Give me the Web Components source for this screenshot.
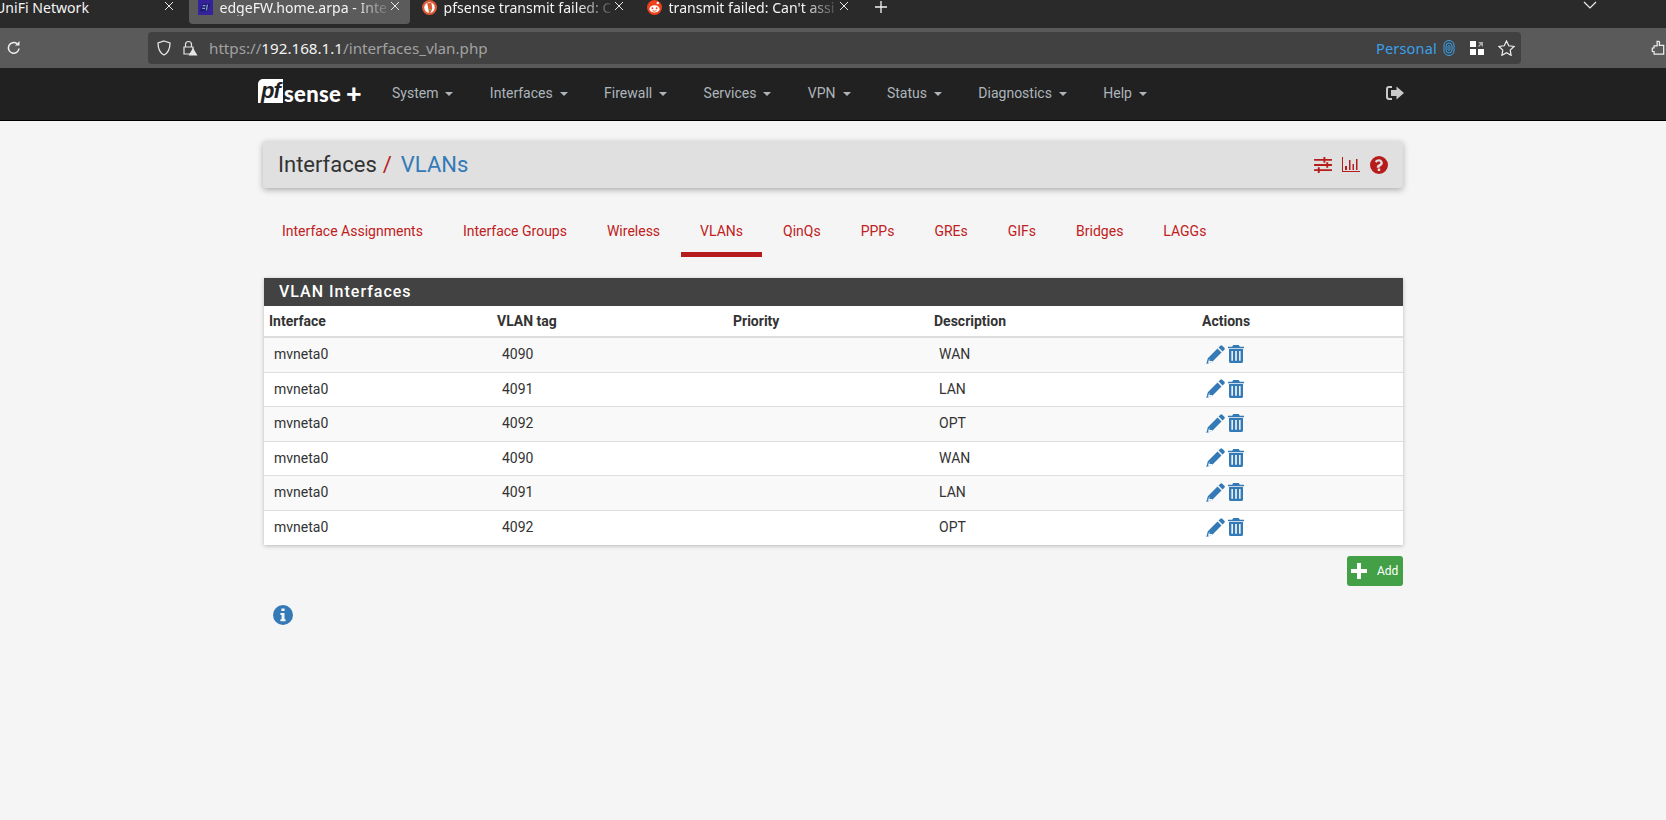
<!DOCTYPE html>
<html>
<head>
<meta charset="utf-8">
<title>VLANs</title>
<style>
    html, body { margin: 0; height: 100%; }
    body {
        background: #f5f5f5;
        font-family: Roboto, "Liberation Sans", sans-serif;
        overflow: hidden;
    }
</style>
</head>
<body>
<browser-tabs></browser-tabs>
<browser-toolbar></browser-toolbar>
<pf-navbar></pf-navbar>
<pf-page>
    <pf-breadcrumb></pf-breadcrumb>
    <pf-tabs></pf-tabs>
    <vlan-panel title="VLAN Interfaces">
        <vlan-row iface="mvneta0" tag="4090" desc="WAN"></vlan-row>
        <vlan-row iface="mvneta0" tag="4091" desc="LAN"></vlan-row>
        <vlan-row iface="mvneta0" tag="4092" desc="OPT"></vlan-row>
        <vlan-row iface="mvneta0" tag="4090" desc="WAN"></vlan-row>
        <vlan-row iface="mvneta0" tag="4091" desc="LAN"></vlan-row>
        <vlan-row iface="mvneta0" tag="4092" desc="OPT"></vlan-row>
    </vlan-panel>
    <add-button>Add</add-button>
    <info-icon></info-icon>
</pf-page>

<script>
const ICONS = {
    pencil: `<svg width="19" height="19" viewBox="0 0 18 18"><path fill="currentColor" d="M13.6.6a1.3 1.3 0 0 1 1.8 0l2 2a1.3 1.3 0 0 1 0 1.8l-1.700 1.700-3.800-3.800zM10.900 3.300l3.800 3.800-9.200 9.200L.3 18l1.400-5.500zM3 13l-1 3.600.5.5L6 16l-.3-.8H3.200v-1.600z"/></svg>`,
    trash: `<svg width="16" height="18" viewBox="0 0 16 18"><path fill="currentColor" fill-rule="evenodd" d="M5.200 0h5.600l1 1.800H16v1.500H0V1.800h4.200zM1 4h14v12.200c0 1-.7 1.800-1.600 1.800H2.600C1.700 18 1 17.200 1 16.200zM3.400 6v9.800h1.500V6zM7.200 6v9.800h1.600V6zM11.100 6v9.800h1.500V6z"/></svg>`,
    sliders: `<svg width="18" height="16" viewBox="0 0 19 17"><path fill="currentColor" d="M0 2h10V0h2v2h7v2h-7v2h-2V4H0zM0 7.500h13v-2h2v2h4v2h-4v2h-2v-2H0zM0 13h4v-2h2v2h13v2H6v2H4v-2H0z"/></svg>`,
    chart: `<svg width="18" height="15" viewBox="0 0 18 15"><path fill="currentColor" d="M0 0h1v14h17v1H0zM3 9h2v4H3zM7 3h1.500v10H7zM10.500 7H12v6h-1.500zM14 2h1.500v11H14z"/></svg>`,
    question: `<svg width="18" height="18" viewBox="0 0 18 18"><path fill="currentColor" fill-rule="evenodd" d="M9 0a9 9 0 1 1 0 18A9 9 0 0 1 9 0zM7.700 12.600v2.400h2.500v-2.400zM9.100 3.200c-2 0-3.300.9-4.200 2.300l1.600 1.300c.6-.8 1.200-1.300 2.300-1.300.9 0 1.600.5 1.600 1.200 0 .8-.6 1.100-1.400 1.600-1 .6-2.200 1.200-2.200 2.800v.6h2.800c0-1.600 3.200-1.700 3.200-4.600 0-2.400-1.900-3.900-3.700-3.900z"/></svg>`,
    info: `<svg width="20" height="20" viewBox="0 0 20 20"><path fill="currentColor" fill-rule="evenodd" d="M10 0a10 10 0 1 1 0 20 10 10 0 0 1 0-20zM8.400 3.500v2.600h3.200V3.500zM7.400 8v2h1.200v4.200H7.400v2h5.200v-2h-1.100V8z"/></svg>`,
    logout: `<svg width="18" height="14" viewBox="0 0 18 14"><path fill="currentColor" d="M6 0v2H3.200C2.500 2 2 2.500 2 3.200v7.600c0 .7.500 1.200 1.200 1.200H6v2H3a3 3 0 0 1-3-3V3a3 3 0 0 1 3-3z"/><path fill="currentColor" d="M10.500.5 18 7l-7.500 6.500V10H5V4h5.500z"/></svg>`
}

class BrowserTabs extends HTMLElement {
    constructor() {
        super();
        this.attachShadow({ mode: "open" });
        this.shadowRoot.innerHTML = `
        <style>
        :host {
            display: flex;
            height: 28px;
            background: #2b2a2b;
            color: #f4f4f4;
            font: 14.100px/16px "Noto Sans", "Open Sans", sans-serif;
            overflow: hidden;
        }
        .tab {
            display: flex;
            align-items: center;
            height: 24px;
            padding-bottom: 8px;
            box-sizing: border-box;
            flex: none;
            border-radius: 0 0 4px 4px;
        }
        .name {
            flex: 1;
            white-space: nowrap;
            -webkit-mask-image: linear-gradient(to right, #000 80%, rgba(0,0,0,.15) 100%);
            margin-left: 6.500px;
            margin-top: -1px;
        }
        .x { flex: none; width: 12px; height: 12px; margin-left: 2px; margin-bottom: 4px; }
        .fav { flex: none; width: 15px; height: 15px; margin-bottom: 2px; }
        .t1 { width: 186px; margin-left: -5px; margin-right: 8px; }
        .t1 .name { margin-left: 0; -webkit-mask-image: none; }
        .t1 .x { margin-right: 6.500px; }
        .t2 { width: 221px; background: #5b5b5b; padding-left: 9px; }
        .t2 .x { margin-right: 10px; }
        .t3 { width: 226px; padding-left: 12px; }
        .t3 .x { margin-right: 11px; }
        .t4 { width: 224px; padding-left: 11px; }
        .t4 .x { margin-right: 10.500px; }
        .new { width: 16px; height: 16px; margin: 0 0 15px 13px; flex: none; align-self: center; }
        .chev { margin: 0 69px 18px auto; align-self: center; width: 14px; height: 10px; }
        </style>
        <div class="tab t1"><span class="name">UniFi Network</span>${this.x()}</div>
        <div class="tab t2">
            <svg class="fav" viewBox="0 0 16 16"><rect width="16" height="16" fill="#33229a"/><path d="M2 12 5 4h8l-3 8z" fill="#1c1c66"/><path d="M5 6h3M4.500 9h3M10 5 9 11" stroke="#8da0d8" stroke-width="1.300"/></svg>
            <span class="name">edgeFW.home.arpa - Inte</span>${this.x()}
        </div>
        <div class="tab t3">
            <svg class="fav" viewBox="0 0 16 16"><circle cx="8" cy="8" r="8" fill="#de5833"/><circle cx="8" cy="8" r="5.600" fill="#fff"/><path d="M5.500 3.500 10 3l1 6-2 4.500H7.500L6.500 8z" fill="#de5833"/><path d="M7 9.500h3l-.5 1.500H7.500z" fill="#65bc46"/></svg>
            <span class="name">pfsense transmit failed: C</span>${this.x()}
        </div>
        <div class="tab t4">
            <svg class="fav" viewBox="0 0 16 16"><circle cx="8" cy="8" r="8" fill="#f0401c"/><ellipse cx="8" cy="9.500" rx="5.500" ry="3.800" fill="#fff"/><circle cx="5.800" cy="8.800" r="1" fill="#f0401c"/><circle cx="10.200" cy="8.800" r="1" fill="#f0401c"/><path d="M6 11.300q2 1.200 4 0" stroke="#f0401c" fill="none"/><circle cx="11.500" cy="3.200" r="1.300" fill="#fff"/></svg>
            <span class="name">transmit failed: Can't assi</span>${this.x()}
        </div>
        <svg class="new" viewBox="0 0 16 16"><path d="M8 2v12M2 8h12" stroke="#f4f4f4" stroke-width="1.300"/></svg>
        <svg class="chev" viewBox="0 0 14 10"><path d="M1 2l6 6 6-6" stroke="#eee" stroke-width="1.200" fill="none"/></svg>
        `
    }

    x() {
        return `<svg class="x" viewBox="0 0 12 12"><path d="M2 2l8 8M10 2l-8 8" stroke="#e8e8e8" stroke-width="1"/></svg>`
    }
}

class BrowserToolbar extends HTMLElement {
    constructor() {
        super();
        this.attachShadow({ mode: "open" });
        this.shadowRoot.innerHTML = `
        <style>
        :host {
            display: flex;
            align-items: center;
            height: 40px;
            background: #5a5a5a;
            color: #f4f4f4;
            font: 14.500px "Noto Sans", "Open Sans", sans-serif;
        }
        svg { flex: none; display: block; }
        .reload { margin-left: 6px; }
        .url {
            display: flex;
            align-items: center;
            height: 32px;
            width: 1373px;
            margin-left: 126px;
            background: #414141;
            border-radius: 4px;
        }
        .shield { margin-left: 9px; }
        .lock { margin-left: 11px; }
        .addr { margin-left: 11px; color: #a2a2a2; font-size: 15.200px; }
        .addr b { font-weight: 400; color: #f2f2f2; }
        .personal { margin-left: auto; color: #3aa0ea; letter-spacing: .2px; }
        .finger { margin-left: 6px; }
        .grid { margin-left: 15px; }
        .star { margin-left: 13.500px; margin-right: 6.500px; }
        .ext { margin-left: 130px; }
        </style>
        <svg class="reload" width="16" height="16" viewBox="0 0 16 16"><path d="M13 8.500A5.300 5.300 0 1 1 11 3.700" stroke="#eee" stroke-width="1.500" fill="none"/><path d="M13.500 1v4.500H9z" fill="#eee"/></svg>
        <div class="url">
            <svg class="shield" width="14" height="16" viewBox="0 0 14 16"><path d="M7 1l6 2c0 5-1 9.500-6 12C2 12.500 1 8 1 3z" stroke="#e6e6e6" stroke-width="1.300" fill="none"/></svg>
            <svg class="lock" width="16" height="16" viewBox="0 0 16 16"><path d="M3.500 7V4.500a3 3 0 0 1 6 0V7M2 7h9v7H2z" stroke="#e6e6e6" stroke-width="1.200" fill="none"/><path d="M11 8l4.500 7.500h-9z" fill="#e6e6e6"/></svg>
            <span class="addr">https://<b>192.168.1.1</b>/interfaces_vlan.php</span>
            <span class="personal">Personal</span>
            <svg class="finger" width="12" height="16" viewBox="0 0 12 16"><g stroke="#3aa0ea" stroke-width="1" fill="none"><path d="M1 5a5 4.500 0 0 1 10 0v6a5 4.500 0 0 1-10 0z"/><path d="M3 6a3 3 0 0 1 6 0v4a3 3 0 0 1-6 0z"/><path d="M5 6.500a1 1 0 0 1 2 0v3a1 1 0 0 1-2 0z"/></g></svg>
            <svg class="grid" width="14" height="14" viewBox="0 0 14 14"><path fill="#fff" d="M0 0h6v6H0zM0 8h6v6H0zM8 8h6v6H8z"/><path fill="#a9a9a9" d="M8 1h5v5l-2-2-2 2-1-1 2-2z"/></svg>
            <svg class="star" width="17" height="16" viewBox="0 0 17 16"><path d="M8.500 1l2.300 4.800 5.200.7-3.800 3.600.9 5.200-4.600-2.500-4.600 2.500.9-5.200L1 6.500l5.200-.7z" stroke="#eee" stroke-width="1.200" fill="none"/></svg>
        </div>
        <svg class="ext" width="14" height="16" viewBox="0 0 16 18"><path d="M7 1.500h1.500a1.500 1.500 0 0 1 1 2.500v2h5v10H3.500v-3h-2v-4h2V6.500H7z" stroke="#eee" stroke-width="1.400" fill="none"/></svg>
        `
    }
}

class PfNavbar extends HTMLElement {
    constructor() {
        super();
        this.attachShadow({ mode: "open" });
        const items = ["System", "Interfaces", "Firewall", "Services", "VPN", "Status", "Diagnostics", "Help"]
        this.shadowRoot.innerHTML = `
        <style>
        :host {
            display: block;
            height: 52px;
            background: #212121;
            border-bottom: 1px solid #000;
            color: #adb5bb;
            font: 14px Roboto, sans-serif;
        }
        .wrap {
            width: 1150px;
            height: 100%;
            box-sizing: border-box;
            padding-bottom: 2px;
            margin: 0 auto;
            display: flex;
            align-items: center;
        }
        .logo {
            display: flex;
            align-items: center;
            width: 134px;
            color: #fff;
            flex: none;
        }
        .pf {
            flex: none;
            width: 25px;
            height: 24px;
            margin-bottom: 4px;
            background: #fff;
            color: #212121;
            font: italic 700 22px/23px "Liberation Sans", sans-serif;
            text-align: center;
            border-radius: 5px 0 0 0;
            letter-spacing: -1px;
        }
        .sense { font: 900 22px Lato, "Open Sans", sans-serif; margin-left: 1px; letter-spacing: .3px; }
        .plus { font: 900 27px/24px Lato, sans-serif; margin-left: 5px; }
        ul { display: flex; list-style: none; margin: 0; padding: 0; flex: 1; }
        li { margin-right: 36.400px; white-space: nowrap; }
        li i {
            display: inline-block;
            margin-left: 7px;
            vertical-align: 2px;
            border-top: 4px solid #adb5bb;
            border-left: 4px solid transparent;
            border-right: 4px solid transparent;
        }
        .out { margin-right: 4px; display: flex; color: #c9c9c9; }
        </style>
        <div class="wrap">
            <div class="logo"><span class="pf">pf</span><span class="sense">sense</span><span class="plus">+</span></div>
            <ul>${items.map(i => `<li>${i}<i></i></li>`).join("")}</ul>
            <div class="out">${ICONS.logout}</div>
        </div>
        `
    }
}

class PfPage extends HTMLElement {
    constructor() {
        super();
        this.attachShadow({ mode: "open" });
        this.shadowRoot.innerHTML = `
        <style>
        :host {
            display: block;
            width: 1140px;
            margin: 20px auto 0;
        }
        </style>
        <slot></slot>
        `
    }
}

class PfBreadcrumb extends HTMLElement {
    constructor() {
        super();
        this.attachShadow({ mode: "open" });
        this.shadowRoot.innerHTML = `
        <style>
        :host {
            display: flex;
            align-items: center;
            height: 47px;
            padding: 0 15px;
            background: #e0e0e0;
            border-radius: 3px;
            box-shadow: 0 2px 6px rgba(0,0,0,.3);
            font-size: 22px;
            color: #333;
        }
        .sep { color: #b71c1c; margin: 0 9px 0 6px; }
        .cur { color: #337ab7; }
        .icons { margin-left: auto; display: flex; align-items: center; color: #b71c1c; }
        svg { display: block; }
        .icons span { margin-left: 10px; }
        </style>
        <span>Interfaces</span><span class="sep">/</span><span class="cur">VLANs</span>
        <div class="icons">
            <span>${ICONS.sliders}</span>
            <span>${ICONS.chart}</span>
            <span>${ICONS.question}</span>
        </div>
        `
    }
}

class PfTabs extends HTMLElement {
    constructor() {
        super();
        this.attachShadow({ mode: "open" });
        const tabs = ["Interface Assignments", "Interface Groups", "Wireless", "VLANs", "QinQs", "PPPs", "GREs", "GIFs", "Bridges", "LAGGs"]
        this.shadowRoot.innerHTML = `
        <style>
        :host {
            display: flex;
            gap: 2px;
            margin: 20px 0 21px;
            font-size: 14px;
            line-height: 20px;
            color: #c02020;
        }
        a {
            padding: 13px 19px 11px;
            border-bottom: 5px solid transparent;
        }
        a.active { border-bottom-color: #b71c1c; }
        </style>
        ${tabs.map(t => `<a class="${t == "VLANs" ? "active" : ""}">${t}</a>`).join("")}
        `
    }
}

class VlanPanel extends HTMLElement {
    constructor() {
        super();
        this.attachShadow({ mode: "open" });
        this.shadowRoot.innerHTML = `
        <style>
        :host {
            display: block;
            margin-left: 1px;
            background: #fff;
            box-shadow: 0 1px 4px rgba(0,0,0,.25);
            font-size: 14px;
            color: #333;
            --cols: 228px 236px 201px 268px 1fr;
        }
        h2 {
            margin: 0;
            height: 28px;
            padding-left: 15px;
            background: #424242;
            color: #fff;
            font-size: 16px;
            font-weight: 500;
            line-height: 28px;
            letter-spacing: 1px;
        }
        .head {
            display: grid;
            grid-template-columns: var(--cols);
            height: 30px;
            line-height: 30px;
            font-weight: 700;
            border-bottom: 2px solid #ddd;
        }
        .head span { padding-left: 5px; }
        </style>
        <h2>${this.getAttribute("title")}</h2>
        <div class="head">
            <span>Interface</span><span>VLAN tag</span><span>Priority</span><span>Description</span><span>Actions</span>
        </div>
        <slot></slot>
        `
    }
}

class VlanRow extends HTMLElement {
    constructor() {
        super();
        this.attachShadow({ mode: "open" });
    }

    connectedCallback() {
        this.shadowRoot.innerHTML = `
        <style>
        :host {
            display: grid;
            grid-template-columns: var(--cols);
            align-items: center;
            height: 34.500px;
            padding-bottom: 1px;
            box-sizing: border-box;
            border-bottom: 1px solid #ddd;
            background: #fff;
        }
        :host(:nth-child(odd)) { background: #f9f9f9; }
        :host(:last-child) { border-bottom: 0; }
        span { padding-left: 10px; }
        .acts { display: flex; align-items: center; gap: 3px; padding-left: 9px; color: #337ab7; }
        svg { display: block; }
        </style>
        <span>${this.getAttribute("iface")}</span>
        <span>${this.getAttribute("tag")}</span>
        <span></span>
        <span>${this.getAttribute("desc")}</span>
        <div class="acts">${ICONS.pencil}${ICONS.trash}</div>
        `
    }
}

class AddButton extends HTMLElement {
    constructor() {
        super();
        this.attachShadow({ mode: "open" });
        this.shadowRoot.innerHTML = `
        <style>
        :host {
            display: flex;
            align-items: center;
            width: 56px;
            height: 30px;
            margin: 11px 0 0 auto;
            padding-left: 4px;
            box-sizing: border-box;
            background: #43a047;
            border-radius: 3px;
            color: #fff;
            font-size: 12px;
        }
        svg { margin-right: 10px; }
        </style>
        <svg width="16" height="16" viewBox="0 0 16 16"><path fill="#fff" d="M6 0h4v6h6v4h-6v6H6v-6H0V6h6z"/></svg>
        <slot></slot>
        `
    }
}

class InfoIcon extends HTMLElement {
    constructor() {
        super();
        this.attachShadow({ mode: "open" });
        this.shadowRoot.innerHTML = `
        <style>
        :host { display: block; width: 20px; margin: 19px 0 0 10px; color: #337ab7; }
        svg { display: block; }
        </style>
        ${ICONS.info}
        `
    }
}

customElements.define("browser-tabs", BrowserTabs);
customElements.define("browser-toolbar", BrowserToolbar);
customElements.define("pf-navbar", PfNavbar);
customElements.define("pf-page", PfPage);
customElements.define("pf-breadcrumb", PfBreadcrumb);
customElements.define("pf-tabs", PfTabs);
customElements.define("vlan-panel", VlanPanel);
customElements.define("vlan-row", VlanRow);
customElements.define("add-button", AddButton);
customElements.define("info-icon", InfoIcon);
</script>
</body>
</html>
